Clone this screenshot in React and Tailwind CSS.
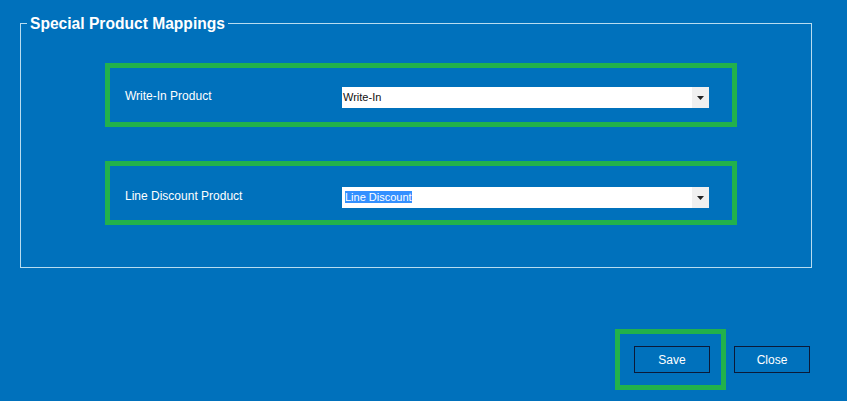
function MappingRow({ label, value, selected, padTop }) {
  return (
    <div
      className={`flex w-[632px] h-[64px] items-start border-[5px] border-[#22b14c] ${padTop}`}
    >
      <span className="w-[232px] pl-[15px] text-[12px] leading-[19px] text-white">
        {label}
      </span>
      <div className="flex h-[21px] w-[367px] items-center bg-white">
        <span className="flex-1 text-[11px] leading-[13px] text-[#111]">
          {selected ? (
            <span className="ml-[3px] bg-[#3390ff] text-white">{value}</span>
          ) : (
            <span className="ml-[1px]">{value}</span>
          )}
        </span>
        <span className="flex h-full w-[17px] items-center justify-center bg-[#f0f0f0]">
          <svg width="7" height="4" viewBox="0 0 7 4">
            <path d="M0 0h7L3.5 4z" fill="#222" />
          </svg>
        </span>
      </div>
    </div>
  );
}

export default function App() {
  return (
    <div
      className="relative h-[401px] w-[847px] overflow-hidden bg-[#0071bc]"
      style={{ fontFamily: '"Liberation Sans", Arial, sans-serif' }}
    >
      <div className="relative ml-[20px] mt-[23px] h-[245px] w-[792px] border border-[#b8dcf0]">
        <span className="absolute left-[6px] top-[-10px] bg-[#0071bc] px-[3px] text-[15.6px] font-bold leading-[20px] text-white">
          Special Product Mappings
        </span>
        <div className="flex flex-col gap-[34px] pl-[84px] pt-[39px]">
          <MappingRow label="Write-In Product" value="Write-In" padTop="pt-[19px]" />
          <MappingRow
            label="Line Discount Product"
            value="Line Discount"
            selected
            padTop="pt-[21px]"
          />
        </div>
      </div>

      <div className="mt-[61px] flex items-center justify-end pr-[37px]">
        <div className="flex h-[61px] w-[111px] items-center border-[5px] border-[#22b14c] pl-[14px]">
          <button className="h-[27px] w-[76px] border border-[#0b1a38] pt-[1px] text-[12px] text-white">
            Save
          </button>
        </div>
        <button className="ml-[8px] h-[27px] w-[76px] border border-[#0b1a38] pt-[1px] text-[12px] text-white">
          Close
        </button>
      </div>
    </div>
  );
}
